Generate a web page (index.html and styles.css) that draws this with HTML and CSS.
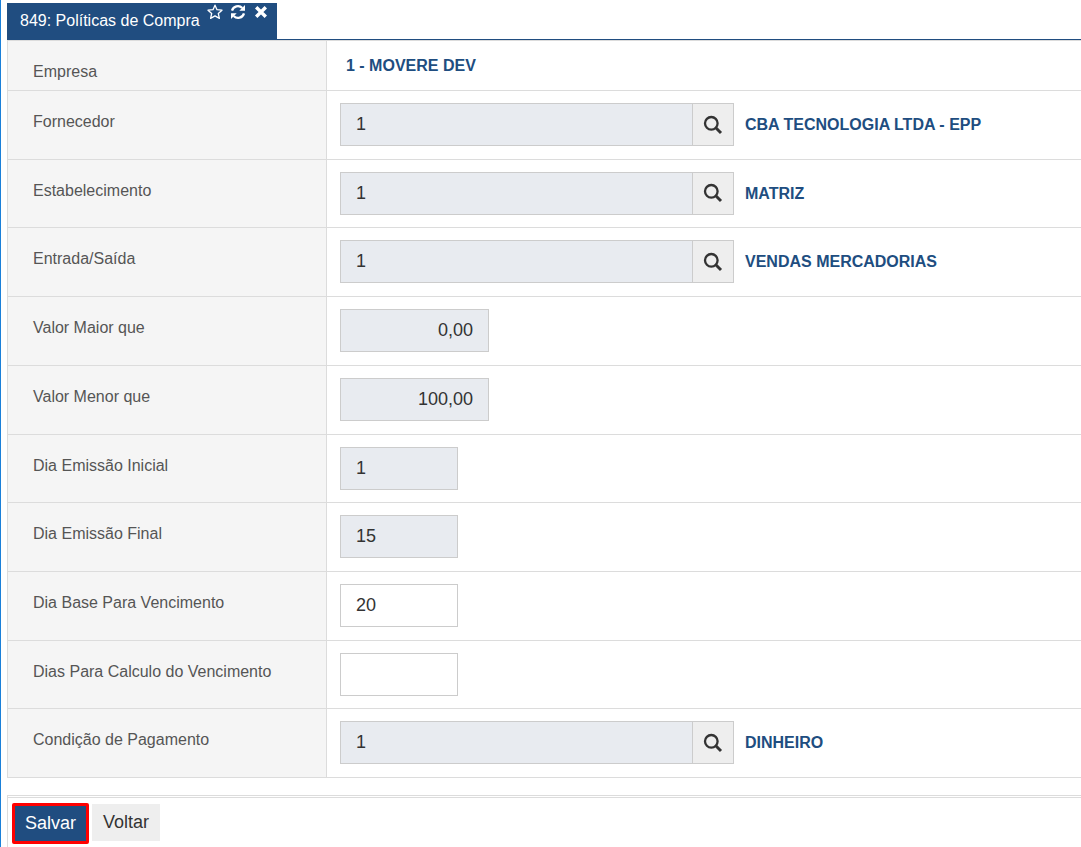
FILE: index.html
```html
<!DOCTYPE html>
<html lang="pt-BR">
<head>
  <meta charset="UTF-8">
  <meta name="viewport" content="width=device-width, initial-scale=1.0">
  <title>849: Políticas de Compra</title>
  <link rel="stylesheet" href="styles.css">
</head>
<body>
  <!-- Shared icons -->
  <svg class="sprite" aria-hidden="true">
    <symbol id="icon-search" viewBox="0 0 20 20">
      <circle cx="8.3" cy="8.3" r="6.3" fill="none" stroke="currentColor" stroke-width="2.3"/>
      <path d="M12.8 12.8L18 18" stroke="currentColor" stroke-width="3"/>
    </symbol>
  </svg>

  <header class="tab-bar">
    <div class="tab">
      <h1 class="tab-title">849: Políticas de Compra</h1>
      <button type="button" class="tab-button" aria-label="Favorito">
        <svg viewBox="0 0 16 16"><path d="M8 1.2L10 5.7L15 6.2L11.3 9.5L12.4 14.4L8 11.9L3.6 14.4L4.7 9.5L1 6.2L6 5.7Z" fill="none" stroke="currentColor" stroke-width="1.3" stroke-linejoin="round"/></svg>
      </button>
      <button type="button" class="tab-button" aria-label="Atualizar">
        <svg viewBox="0 0 16 16"><path d="M2 6.6A6.1 6.1 0 0 1 12.3 4M14 9.4A6.1 6.1 0 0 1 3.7 12" fill="none" stroke="currentColor" stroke-width="2.3"/><path d="M15 1V6.7H9.3ZM1 15V9.3H6.7Z" fill="currentColor"/></svg>
      </button>
      <button type="button" class="tab-button" aria-label="Fechar">
        <svg viewBox="0 0 16 16"><path d="M3.2 3.2L12.8 12.8M12.8 3.2L3.2 12.8" stroke="currentColor" stroke-width="3.4"/></svg>
      </button>
    </div>
  </header>

  <form class="form">
    <div class="fields">
      <div class="row">
        <span class="label">Empresa</span>
        <div class="value"><span class="company">1 - MOVERE DEV</span></div>
      </div>
      <div class="row">
        <label class="label" for="fornecedor">Fornecedor</label>
        <div class="value">
          <input class="field field-search" type="text" id="fornecedor" value="1" readonly>
          <button type="button" class="search" aria-label="Pesquisar fornecedor"><svg><use href="#icon-search"/></svg></button>
          <span class="description">CBA TECNOLOGIA LTDA - EPP</span>
        </div>
      </div>
      <div class="row">
        <label class="label" for="estabelecimento">Estabelecimento</label>
        <div class="value">
          <input class="field field-search" type="text" id="estabelecimento" value="1" readonly>
          <button type="button" class="search" aria-label="Pesquisar estabelecimento"><svg><use href="#icon-search"/></svg></button>
          <span class="description">MATRIZ</span>
        </div>
      </div>
      <div class="row">
        <label class="label" for="entrada">Entrada/Saída</label>
        <div class="value">
          <input class="field field-search" type="text" id="entrada" value="1" readonly>
          <button type="button" class="search" aria-label="Pesquisar entrada/saída"><svg><use href="#icon-search"/></svg></button>
          <span class="description">VENDAS MERCADORIAS</span>
        </div>
      </div>
      <div class="row">
        <label class="label" for="valor-maior">Valor Maior que</label>
        <div class="value"><input class="field field-money" type="text" id="valor-maior" value="0,00" readonly></div>
      </div>
      <div class="row">
        <label class="label" for="valor-menor">Valor Menor que</label>
        <div class="value"><input class="field field-money" type="text" id="valor-menor" value="100,00" readonly></div>
      </div>
      <div class="row">
        <label class="label" for="dia-inicial">Dia Emissão Inicial</label>
        <div class="value"><input class="field field-day" type="text" id="dia-inicial" value="1" readonly></div>
      </div>
      <div class="row">
        <label class="label" for="dia-final">Dia Emissão Final</label>
        <div class="value"><input class="field field-day" type="text" id="dia-final" value="15" readonly></div>
      </div>
      <div class="row">
        <label class="label" for="dia-base">Dia Base Para Vencimento</label>
        <div class="value"><input class="field field-day" type="text" id="dia-base" value="20"></div>
      </div>
      <div class="row">
        <label class="label" for="dias-calculo">Dias Para Calculo do Vencimento</label>
        <div class="value"><input class="field field-day" type="text" id="dias-calculo"></div>
      </div>
      <div class="row">
        <label class="label" for="condicao">Condição de Pagamento</label>
        <div class="value">
          <input class="field field-search" type="text" id="condicao" value="1" readonly>
          <button type="button" class="search" aria-label="Pesquisar condição de pagamento"><svg><use href="#icon-search"/></svg></button>
          <span class="description">DINHEIRO</span>
        </div>
      </div>
    </div>

    <div class="actions">
      <button type="submit" class="button button-save">Salvar</button>
      <button type="button" class="button">Voltar</button>
    </div>
  </form>
</body>
</html>
```
FILE: styles.css
```css
* {
  box-sizing: border-box;
}

body {
  margin: 0;
  padding: 3px 0 0 6px;
  min-height: 100vh;
  display: flex;
  flex-direction: column;
  border-left: 1px solid #1a80d9;
  background: #fff;
  color: #555;
  font-family: "Liberation Sans", Arial, sans-serif;
  font-size: 16px;
  line-height: 20px;
}

button, input {
  margin: 0;
  font-family: inherit;
}

.sprite {
  display: none;
}

.tab-bar {
  display: flex;
  border-bottom: 1px solid #204d80;
}

.tab {
  display: flex;
  align-items: flex-start;
  width: 270px;
  height: 36px;
  padding-left: 13px;
  background: #204d80;
  color: #fff;
}

.tab-title {
  margin: 8px 7px 0 0;
  font-size: 16px;
  font-weight: normal;
}

.tab-button {
  width: 16px;
  height: 16px;
  margin: 1px 7px 0 0;
  padding: 0;
  border: none;
  background: none;
  color: #fff;
  cursor: pointer;
}

.tab-button svg {
  display: block;
  width: 16px;
  height: 16px;
}

.form {
  flex: 1;
  display: flex;
  flex-direction: column;
}

.fields {
  flex: 1;
  display: grid;
  grid-template-rows: auto;
  grid-auto-rows: 1fr;
  border: 1px solid #dcdcdc;
  border-right: none;
  border-bottom: none;
}

.row {
  display: grid;
  grid-template-columns: 319px 1fr;
  border-bottom: 1px solid #dcdcdc;
}

.row:first-child {
  height: 50px;
}

.label {
  padding: 21px 0 0 25px;
  border-right: 1px solid #dcdcdc;
  background: #f5f5f5;
}

.value {
  display: flex;
  align-items: stretch;
  padding: 12px 13px;
}

.company, .description {
  align-self: center;
  color: #204d80;
  font-weight: bold;
}

.company {
  margin-left: 6px;
}

.description {
  margin-left: 11px;
}

.field {
  min-width: 0;
  height: 43px;
  padding: 0 15px;
  border: 1px solid #ccc;
  border-radius: 0;
  background: #fff;
  color: #333;
  font-size: 18px;
}

.field:read-only {
  background: #e8ebf0;
}

.field-search {
  width: 353px;
}

.field-money {
  width: 149px;
  text-align: right;
}

.field-day {
  width: 118px;
}

.search {
  display: flex;
  align-items: center;
  justify-content: center;
  width: 42px;
  height: 43px;
  margin-left: -1px;
  padding: 0;
  border: 1px solid #ccc;
  background: #eee;
  color: #333;
  cursor: pointer;
}

.search svg {
  width: 20px;
  height: 20px;
}

.actions {
  display: flex;
  align-items: flex-start;
  gap: 3px;
  height: 52px;
  margin-top: 17px;
  padding: 5px 0 0 4px;
  border-top: 3px double #dcdcdc;
  border-left: 1px solid #dcdcdc;
}

.button {
  height: 37px;
  margin-top: 1px;
  padding: 0 11px;
  border: none;
  background: #eee;
  color: #333;
  font-size: 18px;
  cursor: pointer;
}

.button-save {
  height: 41px;
  margin-top: 0;
  padding: 0 10px;
  border: 3px solid #f00;
  border-radius: 2px;
  background: #204d80;
  color: #fff;
}
```
